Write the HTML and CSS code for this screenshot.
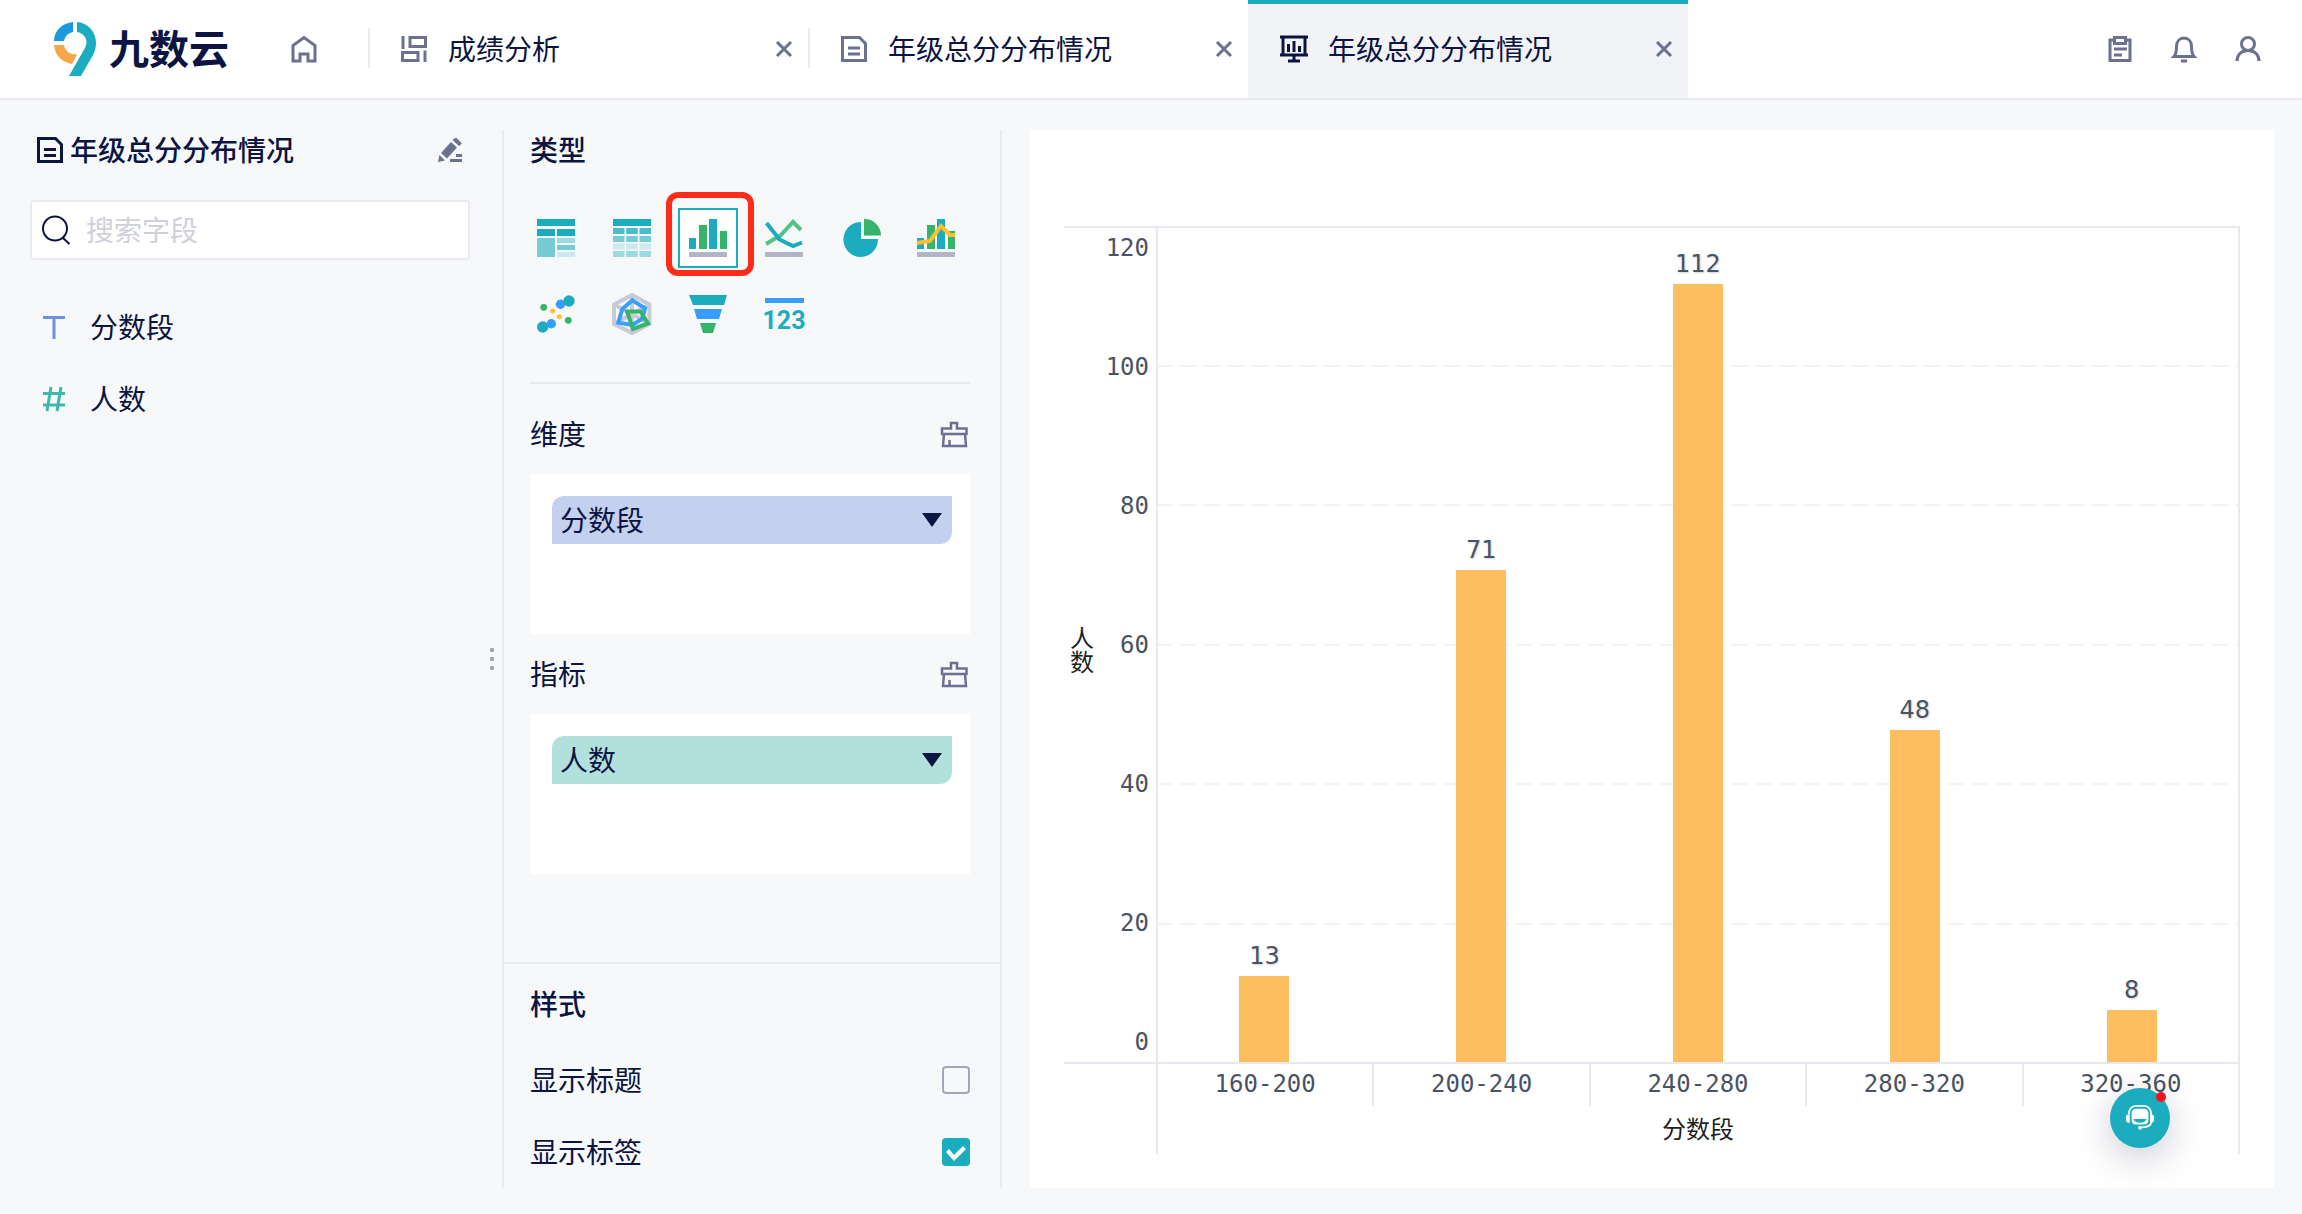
FILE: index.html
```html
<!DOCTYPE html>
<html lang="zh-CN">
<head>
<meta charset="utf-8">
<meta name="viewport" content="width=device-width, initial-scale=1">
<title>九数云 - 年级总分分布情况</title>
<link rel="stylesheet" href="styles.css">
</head>
<body>
<header class="topbar">
  <a class="logo" href="#" aria-label="九数云">
    <svg class="logo-mark" viewBox="0 0 42 54" width="42" height="54" aria-hidden="true">
      <path fill="#1badbf" d="M23 0a20 21 0 0 1 19 21c0 4-1 8-3 12L27 54H15l16-28c1-2 1.500-4 1.500-6 0-5-4-9-9.500-10z"/>
      <path fill="#1c9ade" d="M19 0v10c-5 1-8 4-9 9H0C0 9 8 1 19 0z"/>
      <path fill="#f7a648" d="M0 23h10c1 6 6 10 13 9.500L18 42C7 40 1 33 0 23z"/>
    </svg>
    <span class="logo-text">九数云</span>
  </a>
  <a class="home" href="#" aria-label="首页">
    <svg class="icon" viewBox="0 0 32 32" aria-hidden="true"><path d="M5 12.500 16 4.500l11 8V28h-7v-7h-8v7H5z"/></svg>
  </a>
  <nav class="tabs">
    <div class="tab">
      <a class="tab-link" href="#">
        <svg class="icon" viewBox="0 0 32 32" aria-hidden="true"><path d="M5 3v13M12 4.500h15.500v9H12zM4.500 19.500h15.500v8H4.500zM27 17.500V29"/></svg>
        <span>成绩分析</span>
      </a>
      <button class="close" type="button" aria-label="关闭"><svg viewBox="0 0 24 24" aria-hidden="true"><path d="m5 5 14 14M19 5 5 19"/></svg></button>
    </div>
    <div class="tab">
      <a class="tab-link" href="#">
        <svg class="icon" viewBox="0 0 32 32" aria-hidden="true"><path d="M4.500 4.500h17l6 6v17h-23zM10 15h12M10 21h12"/></svg>
        <span>年级总分分布情况</span>
      </a>
      <button class="close" type="button" aria-label="关闭"><svg viewBox="0 0 24 24" aria-hidden="true"><path d="m5 5 14 14M19 5 5 19"/></svg></button>
    </div>
    <div class="tab tab-active">
      <a class="tab-link" href="#" aria-current="page">
        <svg class="icon icon-dark" viewBox="0 0 32 32" aria-hidden="true"><path d="M2 4h28M5 4v18M27 4v18M2 22h28M16 22v6M10 28h12M10.500 11v8M16 8v11M21.500 13v6"/></svg>
        <span>年级总分分布情况</span>
      </a>
      <button class="close" type="button" aria-label="关闭"><svg viewBox="0 0 24 24" aria-hidden="true"><path d="m5 5 14 14M19 5 5 19"/></svg></button>
    </div>
  </nav>
  <div class="tools">
    <button class="tool" type="button" aria-label="任务"><svg class="icon" viewBox="0 0 32 32" aria-hidden="true"><path d="M10 7H6v20.500h20V7h-4M10.500 4.500h11v6h-11zM10 16h13M10 22h8"/></svg></button>
    <button class="tool" type="button" aria-label="通知"><svg class="icon" viewBox="0 0 32 32" aria-hidden="true"><path d="M6 23.500c2-2 2.500-5 2.500-10 0-5 3-8.500 7.500-8.500s7.500 3.500 7.500 8.500c0 5 .5 8 2.500 10zM13 28h6"/></svg></button>
    <button class="tool" type="button" aria-label="账户"><svg class="icon" viewBox="0 0 32 32" aria-hidden="true"><circle cx="16" cy="11" r="6.500"/><path d="M5 28c0-6 4-10.500 11-10.500S27 22 27 28"/></svg></button>
  </div>
</header>

<main class="workspace">
  <aside class="fields">
    <div class="fields-head">
      <svg class="icon icon-dark" viewBox="0 0 32 32" aria-hidden="true"><path d="M4.500 4.500h17l6 6v17h-23zM10 15.500h12M10 21.500h12"/></svg>
      <h1>年级总分分布情况</h1>
      <button class="tool" type="button" aria-label="编辑"><svg class="pencil" viewBox="0 0 32 32" aria-hidden="true"><path d="m7 19 10-11 6 5.500L13 24.500zM18.500 6 22 3.500l6 6L25 12zM5.500 21l5.500 5.500-7 1.500zM16 25h12v3H16zM22 20h6v3h-6z"/></svg></button>
    </div>
    <label class="search">
      <svg class="search-icon" viewBox="0 0 32 32" aria-hidden="true"><circle cx="15" cy="14.500" r="12"/><path d="m23 24 6.500 6"/></svg>
      <input type="text" placeholder="搜索字段" aria-label="搜索字段">
    </label>
    <ul class="field-list">
      <li><svg class="field-icon text-type" viewBox="0 0 24 24" aria-hidden="true"><path d="M1 2.500h22M12 3v21"/></svg><span>分数段</span></li>
      <li><svg class="field-icon number-type" viewBox="0 0 24 24" aria-hidden="true"><path d="M1 6.500h22M1 18h22M9 0 5 24M19 0l-4 24"/></svg><span>人数</span></li>
    </ul>
    <div class="handle" aria-hidden="true"><i></i><i></i><i></i></div>
  </aside>

  <section class="config">
    <div class="config-data">
      <h2>类型</h2>
      <div class="types">
        <button type="button" aria-label="分组表"><svg viewBox="0 0 40 40"><path fill="#1badbf" d="M1 1h38v7H1zM1 11h18v7H1zM21 11h18v7H21z"/><path fill="#76cbd4" d="M1 20h18v19H1zM21 27h18v5H21z"/><path fill="#a0dae1" d="M21 20h18v5H21z"/><path fill="#cbeaef" d="M21 34h18v5H21z"/></svg></button>
        <button type="button" aria-label="明细表"><svg viewBox="0 0 40 40"><path fill="#1badbf" d="M1 1h38v7H1z"/><path fill="#4bbdca" d="M1 10h11.500v6H1zM14.200 10h11.500v6H14.200zM27.500 10H39v6H27.500z"/><path fill="#76cbd4" d="M1 18h11.500v6H1zM14.200 18h11.500v6H14.200zM27.500 18H39v6H27.500z"/><path fill="#cbeaef" d="M1 25.500h11.500v6H1zM14.200 25.500h11.500v6H14.200zM27.500 25.500H39v6H27.500z"/><path fill="#9bdae1" d="M1 33h11.500v6H1zM14.200 33h11.500v6H14.200zM27.500 33H39v6H27.500z"/></svg></button>
        <button class="selected" type="button" aria-label="柱形图" aria-pressed="true"><svg viewBox="0 0 40 40"><path fill="#1badbf" d="M1 20h7v11H1zM21 1h8v30h-8z"/><path fill="#35b46b" d="M11 7h8v24h-8zM32 13h7v18h-7z"/><path fill="#b3b5c6" d="M1 34h38v5H1z"/></svg></button>
        <button type="button" aria-label="折线图"><svg viewBox="0 0 40 40" fill="none" stroke-width="4"><path stroke="#55c184" d="m2 26 15-9L29 4l8 8"/><path stroke="#1badbf" d="m2.500 5 13 16.500L29 28l9-3.500"/><path fill="#b3b5c6" d="M1 34h38v5H1z"/></svg></button>
        <button type="button" aria-label="饼图"><svg viewBox="0 0 40 40"><path fill="#1badbf" d="M21 4v17h17a17.300 17.500 0 1 1-17-17z"/><path fill="#35b46b" d="M24 1a16.500 16.500 0 0 1 17 16.500H24z"/></svg></button>
        <button type="button" aria-label="组合图"><svg viewBox="0 0 40 40"><path fill="#1badbf" d="M1 20h7v11H1zM21 1h8v30h-8z"/><path fill="#35b46b" d="M11 7h8v24h-8zM32 13h7v18h-7z"/><path fill="#b3b5c6" d="M1 34h38v5H1z"/><path fill="none" stroke="#ffc02e" stroke-width="4" d="m1 25 13-2L25 8l9 9h5"/></svg></button>
        <button type="button" aria-label="散点图"><svg viewBox="0 0 40 40"><g fill="#359eff"><circle cx="24.500" cy="10.300" r="4.700"/><circle cx="15.300" cy="29.700" r="4.700"/></g><g fill="#1badbf"><circle cx="33" cy="7" r="5.700"/><circle cx="6.700" cy="33" r="5.700"/></g><g fill="#35b46b"><circle cx="7.700" cy="13.300" r="3.400"/><circle cx="32.300" cy="26.300" r="3.400"/></g><g fill="#ffc02e"><circle cx="16.700" cy="17" r="2.500"/><circle cx="23.300" cy="22.700" r="2.500"/></g></svg></button>
        <button type="button" aria-label="雷达图"><svg viewBox="0 0 40 40" fill="none" stroke-width="4"><path stroke="#c8cad8" d="m20 1 17.500 9.500v19.500L20 39 2 30V10.500zM20 20 2 10.500M20 20V1M20 20l17.500-9.500M20 20v19M20 20 2 30M20 20l17.500 10"/><path stroke="#359eff" d="m20.300 6.300 12.700 8L30 25l-9.700 6-14-2.300 4-13.700z"/><path stroke="#35b46b" d="M15 17.500h13.500L36 29.500 21 35z"/></svg></button>
        <button type="button" aria-label="漏斗图"><svg viewBox="0 0 40 40"><path fill="#1badbf" d="M1 1h38l-3 10H5z"/><path fill="#359eff" d="M6 15h28l-3 10H9z"/><path fill="#35b46b" d="M12 29h16l-3 10H15z"/></svg></button>
        <button type="button" aria-label="指标卡"><svg viewBox="0 0 40 40"><path fill="#359eff" d="M1 4h39v5H1z"/><text class="digits" x="20" y="35">123</text></svg></button>
      </div>
      <hr>
      <div class="shelf-head"><h3>维度</h3><button class="tool" type="button" aria-label="清空维度"><svg class="icon icon-thin" viewBox="0 0 32 32" aria-hidden="true"><path d="M4 10.500h9V5h6v5.500h9.500V16H4zM6 16 5 28h23l-1-12M11.500 28v-6"/></svg></button></div>
      <div class="shelf"><button class="pill pill-dimension" type="button"><span>分数段</span><i class="caret"></i></button></div>
      <div class="shelf-head"><h3>指标</h3><button class="tool" type="button" aria-label="清空指标"><svg class="icon icon-thin" viewBox="0 0 32 32" aria-hidden="true"><path d="M4 10.500h9V5h6v5.500h9.500V16H4zM6 16 5 28h23l-1-12M11.500 28v-6"/></svg></button></div>
      <div class="shelf"><button class="pill pill-measure" type="button"><span>人数</span><i class="caret"></i></button></div>
    </div>
    <div class="config-style">
      <h2>样式</h2>
      <label class="option"><span>显示标题</span><input type="checkbox"></label>
      <label class="option"><span>显示标签</span><input type="checkbox" checked></label>
    </div>
  </section>

  <section class="canvas">
    <div class="chart">
      <div class="y-title">人数</div>
      <div class="y-axis"><span>120</span><span>100</span><span>80</span><span>60</span><span>40</span><span>20</span><span>0</span></div>
      <div class="plot">
        <div class="grid-lines" aria-hidden="true"><i></i><i></i><i></i><i></i><i></i><i></i></div>
        <div class="bars">
          <div class="column"><span>13</span><div class="bar" style="height:10.300%"></div></div>
          <div class="column"><span>71</span><div class="bar" style="height:59%"></div></div>
          <div class="column"><span>112</span><div class="bar" style="height:93.300%"></div></div>
          <div class="column"><span>48</span><div class="bar" style="height:39.800%"></div></div>
          <div class="column"><span>8</span><div class="bar" style="height:6.200%"></div></div>
        </div>
      </div>
      <div class="x-axis">
        <div class="x-labels"><span>160-200</span><span>200-240</span><span>240-280</span><span>280-320</span><span>320-360</span></div>
        <div class="x-title">分数段</div>
      </div>
    </div>
    <button class="support" type="button" aria-label="客服">
      <svg viewBox="0 0 32 32" aria-hidden="true"><path fill="none" stroke="#fff" stroke-width="2" d="M4 12C4 6 8 3 12 3h8c4 0 8 3 8 9v8c0 4-4 6-12 6"/><path fill="#fff" d="M1 15c0-2 1-3 4-3v9c-3 0-4-1-4-3zM31 15c0-2-1-3-4-3v9c3 0 4-1 4-3zM7 11c0-3 2-5 5-5h8c3 0 5 2 5 5v7c0 3-2 5-5 5h-8c-3 0-5-2-5-5z"/><circle cx="16" cy="26.500" r="2" fill="#fff"/><path fill="#1badbf" d="M9 17h14c-1 3-4 4-7 4s-6-1-7-4z"/></svg>
      <i class="unread"></i>
    </button>
  </section>
</main>
</body>
</html>
```
FILE: styles.css
```css
:root {
  --ink: #0c1441;
  --muted: #6b718e;
  --line: #e8eaed;
  --teal: #1badbf;
  --chart-text: #4a5361;
  --chart-line: #e8e9ef;
}

* { box-sizing: border-box; }

body {
  margin: 0;
  min-height: 100vh;
  display: flex;
  flex-direction: column;
  background: #f7f8fa;
  color: var(--ink);
  font: 28px/40px "Noto Sans CJK SC", sans-serif;
}

h1, h2, h3 { margin: 0; padding-bottom: 2px; font-size: 28px; font-weight: 500; line-height: 38px; }
h3 { font-weight: 400; }
a { color: inherit; text-decoration: none; }
button { margin: 0; padding: 0; border: 0; background: none; color: inherit; font: inherit; cursor: pointer; }
svg { display: block; flex: none; overflow: visible; }

.icon { width: 32px; height: 32px; fill: none; stroke: var(--muted); stroke-width: 3; }
.icon-dark { stroke: var(--ink); }
.icon-thin { stroke-width: 2.5; }
.pencil { width: 32px; height: 32px; fill: var(--muted); }

/* Top bar */
.topbar { display: flex; align-items: center; height: 100px; border-bottom: 2px solid var(--line); background: #fff; }
.logo { display: flex; align-items: center; gap: 13px; padding-left: 54px; }
.logo-text { padding-bottom: 4px; font-size: 40px; font-weight: 700; }
.home { margin: 0 48px 0 59px; }
.tabs { display: flex; flex: 0 1 1320px; align-self: stretch; }
.tab { position: relative; display: flex; flex: 1; align-items: center; justify-content: space-between; padding: 0 12px 0 30px; }
.tab::before { content: ""; position: absolute; left: 0; top: 28px; width: 2px; height: 40px; background: var(--line); }
.tab-active { background: #f2f3f7; }
.tab-active::before { top: 0; width: 100%; height: 4px; background: var(--teal); }
.tab-link { display: flex; align-items: center; gap: 18px; white-space: nowrap; }
.tab-link span, .field-list span, .option span, .pill span { padding-bottom: 2px; }
.close svg { width: 24px; height: 24px; fill: none; stroke: var(--muted); stroke-width: 3; }
.tools { display: flex; gap: 32px; margin-left: auto; padding-right: 38px; }

/* Workspace */
.workspace { flex: 1; display: flex; padding: 30px 28px 26px 0; }

.fields { position: relative; flex: 0 0 504px; padding: 0 32px 0 30px; border-right: 2px solid var(--line); }
.fields-head { display: flex; align-items: center; gap: 4px; padding: 0 4px; height: 40px; }
.fields-head .tool { margin-left: auto; }
.search { display: flex; align-items: center; gap: 14px; height: 60px; margin-top: 30px; padding: 0 8px; border: 2px solid var(--line); border-radius: 4px; background: #fff; }
.search-icon { width: 32px; height: 32px; fill: none; stroke: var(--ink); stroke-width: 2; }
.search input { flex: 1; min-width: 0; padding: 0 0 2px; border: 0; outline: 0; background: none; color: inherit; font: inherit; }
.search input::placeholder { color: #cfd0da; opacity: 1; }
.field-list { display: grid; gap: 30px; margin: 46px 0 0; padding: 0 12px; list-style: none; }
.field-list li { display: flex; align-items: center; gap: 24px; }
.field-icon { width: 24px; height: 24px; fill: none; stroke-width: 3; }
.text-type { stroke: #6a93dc; }
.number-type { stroke: #3db8ab; }
.handle { position: absolute; right: 8px; top: 50%; display: grid; gap: 5px; transform: translateY(-50%); }
.handle i { width: 4px; height: 4px; border-radius: 1px; background: #a2a5b5; }

/* Chart configuration */
.config { flex: 0 0 498px; border-right: 2px solid var(--line); }
.config-data { min-height: 832px; padding: 0 30px 0 26px; }
.types { display: grid; grid-template-columns: repeat(6, 60px); gap: 16px; margin: 38px -4px 0; }
.types button { position: relative; display: grid; place-items: center; width: 60px; height: 60px; }
.types svg { width: 40px; height: 40px; }
.types .selected { border: 2px solid var(--teal); background: #fff; }
.types .selected::after { content: ""; position: absolute; inset: -18px -18px -10px -14px; border: 6px solid #ff2c1c; border-radius: 12px; }
.digits { fill: var(--teal); font: 700 25px Roboto, sans-serif; text-anchor: middle; }
hr { height: 2px; margin: 38px 0 0; border: 0; background: var(--line); }
.shelf-head { display: flex; align-items: center; justify-content: space-between; height: 80px; }
hr + .shelf-head { height: 90px; padding-top: 10px; }
.shelf { min-height: 160px; padding: 22px 18px 22px 22px; background: #fff; }
.pill { display: flex; align-items: center; justify-content: space-between; width: 100%; height: 48px; padding: 0 10px 0 8px; border-radius: 12px 0; }
.pill-dimension { background: #c3d1ef; }
.pill-measure { background: #b2e0dd; }
.caret { width: 20px; height: 14px; background: var(--ink); clip-path: polygon(0 0, 100% 0, 50% 100%); }
.config-style { padding: 20px 30px 16px 26px; border-top: 2px solid var(--line); }
.option { display: flex; align-items: center; justify-content: space-between; height: 40px; margin-top: 32px; }
.config-style h2 + .option { margin-top: 36px; }
.option input { appearance: none; width: 28px; height: 28px; margin: 0; border: 2px solid #a2a7b7; border-radius: 4px; }
.option input:checked { border: 0; background: var(--teal); }
.option input:checked::before { content: ""; display: block; width: 28px; height: 28px; background: #fff; clip-path: polygon(4px 14px, 7px 11px, 12px 17px, 21px 8px, 24px 11px, 12px 23px); }

/* Chart */
.canvas { position: relative; flex: 1; min-width: 0; display: flex; margin-left: 28px; padding: 96px 34px 34px; background: #fff; }
.chart { flex: 1; display: grid; grid-template: 1fr 90px / 36px 56px 1fr; border-top: 2px solid var(--chart-line); }
.y-title { display: grid; place-items: center; padding: 8px 6px 0; color: #1f1f1f; font-size: 24px; line-height: 24px; word-break: break-all; }
.y-title, .y-axis { border-bottom: 2px solid var(--chart-line); }
.y-axis, .x-labels { color: var(--chart-text); font-family: "DejaVu Sans Mono", monospace; font-size: 24px; }
.y-axis { display: flex; flex-direction: column; padding-right: 7px; text-align: right; }
.y-axis span { display: flex; flex: 2 1 0; align-items: center; justify-content: flex-end; }
.y-axis span:first-child { flex-grow: 1; align-items: flex-start; }
.y-axis span:last-child { flex-grow: 1; align-items: flex-end; }
.plot { display: grid; border: solid var(--chart-line); border-width: 0 2px 2px; }
.plot > * { grid-area: 1 / 1; }
.grid-lines { display: flex; flex-direction: column; margin: -1px 0 -2px; }
.grid-lines i { flex: 1; background: repeating-linear-gradient(90deg, #f2f3f8 0 14px, transparent 14px 22px, #f2f3f8 22px 24px) bottom / 100% 2px no-repeat; }
.grid-lines i:last-child { background: none; }
.bars { display: grid; grid-template-columns: repeat(5, 1fr); margin: 0 -2px; color: var(--chart-text); font-family: "DejaVu Sans", sans-serif; font-size: 24px; }
.column { display: flex; flex-direction: column; align-items: center; justify-content: flex-end; }
.column span { text-shadow: 1px 1px 2px #cfd3da; }
.bar { width: 50px; background: #fdbe60; }
.x-axis { grid-column: 3; border: solid var(--chart-line); border-width: 0 2px; }
.x-labels { display: grid; grid-template-columns: repeat(5, 1fr); margin-left: -2px; text-align: center; }
.x-labels span { height: 42px; border-left: 2px solid var(--chart-line); }
.x-title { margin-top: 2px; color: #1f1f1f; font-size: 24px; text-align: center; }

.support { position: absolute; right: 104px; bottom: 40px; display: grid; place-items: center; width: 60px; height: 60px; border-radius: 50%; background: var(--teal); box-shadow: 0 10px 36px rgba(12, 20, 65, .22); }
.support svg { width: 30px; height: 30px; }
.unread { position: absolute; right: 4px; top: 4px; width: 10px; height: 10px; border-radius: 50%; background: #ff0d1c; }
```
